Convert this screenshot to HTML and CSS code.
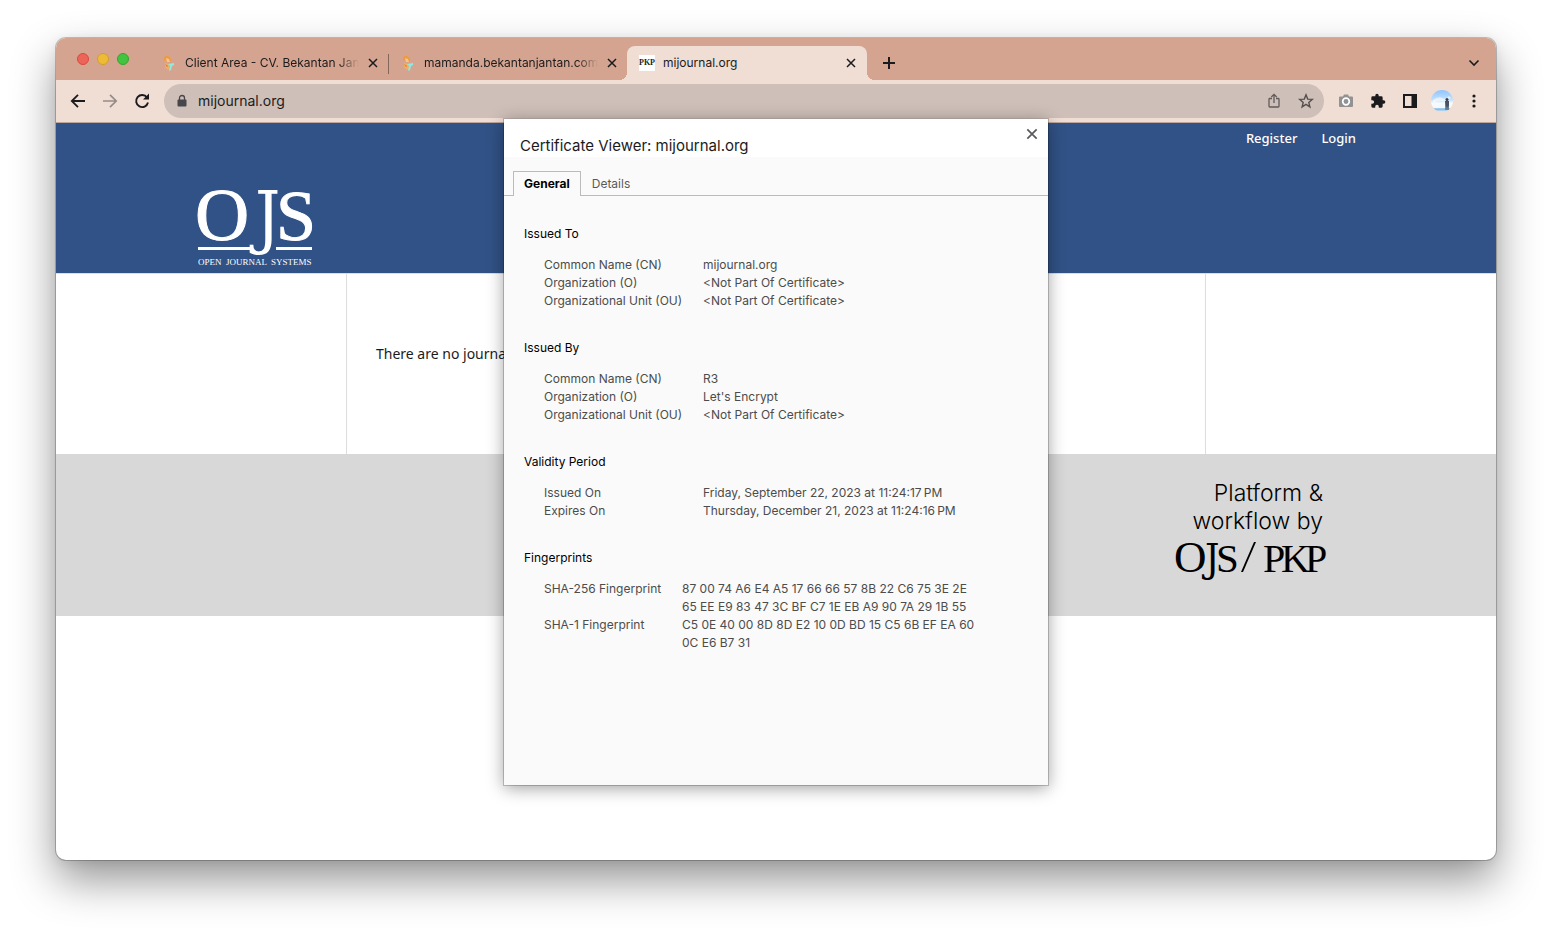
FILE: index.html
```html
<!DOCTYPE html>
<html lang="en">
<head>
<meta charset="utf-8">
<title>mijournal.org</title>
<link rel="stylesheet" href="styles.css">
</head>
<body>
<svg class="defs" width="0" height="0" aria-hidden="true">
  <symbol id="close" viewBox="0 0 12 12"><path d="M2 2l8 8M10 2l-8 8" fill="none" stroke="currentColor" stroke-width="1.5"/></symbol>
  <symbol id="monkey" viewBox="0 0 16 16">
    <path d="M3 3Q4 0 7 1Q10 2 10 6Q9 8 7 7L5 5L3 6Z" fill="#ef9b3d"/>
    <path d="M5 3L8 4L9 7L6 7Z" fill="#f7c58b"/>
    <path d="M4 8l4 1 1 4-2 2-3-3Z" fill="#f3ae62"/>
    <path d="M4 9l3 2-1 1Z" fill="#e0703a"/>
    <path d="M7 9l6-1v2l-2 1-1 4-2 1 1-5Z" fill="#8feadf"/>
  </symbol>
</svg>
<div class="window">
  <div class="tabstrip">
    <div class="lights">
      <button class="light red" aria-label="Close window"></button>
      <button class="light yellow" aria-label="Minimize window"></button>
      <button class="light green" aria-label="Zoom window"></button>
    </div>
    <div class="tab">
      <svg class="favicon"><use href="#monkey"/></svg>
      <span class="tab-title fade">Client Area - CV. Bekantan Jantan</span>
      <button class="tab-close" aria-label="Close tab"><svg width="12" height="12"><use href="#close"/></svg></button>
    </div>
    <div class="tab divided">
      <svg class="favicon"><use href="#monkey"/></svg>
      <span class="tab-title fade">mamanda.bekantanjantan.com/</span>
      <button class="tab-close" aria-label="Close tab"><svg width="12" height="12"><use href="#close"/></svg></button>
    </div>
    <div class="tab active">
      <span class="favicon pkp">PKP</span>
      <span class="tab-title">mijournal.org</span>
      <button class="tab-close" aria-label="Close tab"><svg width="12" height="12"><use href="#close"/></svg></button>
    </div>
    <button class="new-tab" aria-label="New tab"><svg width="12" height="12" viewBox="0 0 12 12"><path d="M6 0v12M0 6h12" stroke="#1b1b1d" stroke-width="2"/></svg></button>
    <button class="tab-menu" aria-label="Search tabs"><svg width="12" height="8" viewBox="0 0 12 8"><path d="M1.500 1.500L6 6l4.500-4.500" fill="none" stroke="#1b1b1d" stroke-width="1.600"/></svg></button>
  </div>

  <div class="toolbar">
    <button aria-label="Back"><svg width="16" height="16" viewBox="0 0 16 16"><path d="M15 8H2M8 1.800L1.800 8 8 14.200" fill="none" stroke="#1b1b1d" stroke-width="1.800"/></svg></button>
    <button aria-label="Forward"><svg width="16" height="16" viewBox="0 0 16 16"><path d="M1 8h13M8 1.800L14.200 8 8 14.200" fill="none" stroke="#968c87" stroke-width="1.700"/></svg></button>
    <button aria-label="Reload"><svg width="16" height="16" viewBox="0 0 16 16"><path d="M13 4.500A6 6 0 1 0 14 9.500" fill="none" stroke="#1b1b1d" stroke-width="1.900"/><path d="M15 .500v6H9Z" fill="#1b1b1d"/></svg></button>
    <div class="omnibox">
      <svg width="10" height="12" viewBox="0 0 10 12"><path d="M2.500 5V3a2.500 2.500 0 0 1 5 0v2" fill="none" stroke="#47474b" stroke-width="1.300"/><rect x="0.500" y="4.500" width="9" height="7" rx="1" fill="#47474b"/></svg>
      <input class="address" type="text" aria-label="Address" value="mijournal.org">
      <button aria-label="Share"><svg width="16" height="16" viewBox="0 0 16 16"><path d="M6 5.500H3.800Q3 5.500 3 6.300V13.200Q3 14 3.800 14H12.200Q13 14 13 13.200V6.300Q13 5.500 12.200 5.500H10M8 10V1.500M5.300 4L8 1.300 10.700 4" fill="none" stroke="#605b5a" stroke-width="1.300"/></svg></button>
      <button aria-label="Bookmark"><svg width="16" height="16" viewBox="0 0 16 16"><path d="M8 1.800l1.700 4.300 4.600.3-3.500 3 1.100 4.500L8 11.400l-3.900 2.500 1.100-4.500-3.500-3 4.600-.3Z" fill="none" stroke="#55504f" stroke-width="1.400"/></svg></button>
    </div>
    <div class="tools">
      <button aria-label="Screenshot"><svg width="16" height="16" viewBox="0 0 16 16"><path d="M2 3.500h3L6 1.500h4l1 2h3Q15 3.500 15 4.500v8.500Q15 14 14 14H2Q1 14 1 13V4.500Q1 3.500 2 3.500Z" fill="#929292"/><circle cx="8" cy="8.500" r="3.300" fill="#929292" stroke="#fff" stroke-width="1.700"/></svg></button>
      <button aria-label="Extensions"><svg width="16" height="16" viewBox="0 0 24 24"><path d="M20.500 11H19V7a2 2 0 0 0-2-2h-4V3.500a2.500 2.500 0 0 0-5 0V5H4a2 2 0 0 0-2 2v3.800h1.500a2.700 2.700 0 0 1 0 5.400H2V20a2 2 0 0 0 2 2h3.800v-1.500a2.700 2.700 0 0 1 5.400 0V22H17a2 2 0 0 0 2-2v-4h1.500a2.500 2.500 0 0 0 0-5Z" fill="#1b1b1d"/></svg></button>
      <button aria-label="Side panel"><svg width="16" height="16" viewBox="0 0 16 16"><path d="M1 1h14v14H1ZM3 3v10h6.500V3Z" fill="#1b1b1d" fill-rule="evenodd"/></svg></button>
      <button aria-label="Profile"><svg width="22" height="22" viewBox="0 0 22 22">
        <defs><linearGradient id="sky" x1="0" y1="0" x2="0" y2="1"><stop offset="0" stop-color="#8fc3ff"/><stop offset=".45" stop-color="#c5e2fb"/><stop offset=".6" stop-color="#f8fbfd"/><stop offset=".8" stop-color="#f3f8fb"/><stop offset=".86" stop-color="#76b5e4"/><stop offset="1" stop-color="#e3edf3"/></linearGradient></defs>
        <circle cx="11" cy="11" r="11" fill="url(#sky)"/><path d="M2 10q5-4 9-2t7-2l2 2q-5 4-9 3t-9 2Z" fill="#fff" opacity=".6"/><circle cx="16" cy="9.500" r="1.500" fill="#333c49"/><path d="M14 11h4v4l-.5 5h-1l-.5-4-.5 4h-1Z" fill="#475365"/></svg></button>
      <button aria-label="Menu"><svg width="16" height="16" viewBox="0 0 16 16" fill="#1b1b1d"><circle cx="8" cy="3" r="1.600"/><circle cx="8" cy="8" r="1.600"/><circle cx="8" cy="13" r="1.600"/></svg></button>
    </div>
  </div>

  <div class="page">
    <header class="site-header">
      <div class="wrap">
        <nav class="user-nav"><a href="#">Register</a><a href="#">Login</a></nav>
        <a class="logo" href="#" aria-label="Open Journal Systems">
          <svg width="118" height="80" viewBox="0 0 118 80" fill="#fff">
            <text class="logo-letter bold-edge" x="-1" y="52" font-size="75">O</text>
            <text class="logo-stem" x="59" y="53" font-size="70">J</text>
            <text class="logo-letter bold-edge" x="80" y="52" font-size="72">S</text>
            <path d="M2 59h53v3H2ZM80 59h36v3H80Z"/>
            <text class="logo-letter" y="77" font-size="9"><tspan x="2">OPEN</tspan><tspan x="30">JOURNAL</tspan><tspan x="75">SYSTEMS</tspan></text>
          </svg>
        </a>
      </div>
    </header>
    <main class="site-main"><p>There are no journals available.</p></main>
    <footer class="site-footer">
      <div class="wrap">
        <a class="brand" href="#">
          <span class="brand-text">Platform &amp;</span>
          <span class="brand-text">workflow by</span>
          <svg width="152" height="44" viewBox="0 0 152 44" fill="#000">
            <text class="logo-letter" x="-1" y="34" font-size="45">O</text>
            <text class="logo-stem" x="30" y="34" font-size="40">J</text>
            <text class="logo-letter" x="41" y="34" font-size="41">S</text>
            <path d="M79 4h2L68 34h-2Z"/>
            <text class="logo-letter" x="88" y="34" font-size="40">P</text>
            <text class="logo-letter" x="106" y="34" font-size="40">K</text>
            <text class="logo-letter" x="130" y="34" font-size="40">P</text>
          </svg>
        </a>
      </div>
    </footer>
  </div>

  <section class="dialog" role="dialog" aria-labelledby="dialog-title">
    <div class="dialog-head">
      <h1 id="dialog-title">Certificate Viewer: mijournal.org</h1>
      <button class="dialog-close" aria-label="Close"><svg width="14" height="14"><use href="#close"/></svg></button>
    </div>
    <div class="dialog-tabs" role="tablist">
      <button class="dialog-tab selected" role="tab" aria-selected="true">General</button>
      <button class="dialog-tab" role="tab" aria-selected="false">Details</button>
    </div>
    <div class="dialog-body">
      <section class="group">
        <h2>Issued To</h2>
        <dl>
          <dt>Common Name (CN)</dt><dd>mijournal.org</dd>
          <dt>Organization (O)</dt><dd>&lt;Not Part Of Certificate&gt;</dd>
          <dt>Organizational Unit (OU)</dt><dd>&lt;Not Part Of Certificate&gt;</dd>
        </dl>
      </section>
      <section class="group">
        <h2>Issued By</h2>
        <dl>
          <dt>Common Name (CN)</dt><dd>R3</dd>
          <dt>Organization (O)</dt><dd>Let's Encrypt</dd>
          <dt>Organizational Unit (OU)</dt><dd>&lt;Not Part Of Certificate&gt;</dd>
        </dl>
      </section>
      <section class="group">
        <h2>Validity Period</h2>
        <dl>
          <dt>Issued On</dt><dd>Friday, September 22, 2023 at 11:24:17&#8239;PM</dd>
          <dt>Expires On</dt><dd>Thursday, December 21, 2023 at 11:24:16&#8239;PM</dd>
        </dl>
      </section>
      <section class="group">
        <h2>Fingerprints</h2>
        <dl class="prints">
          <dt>SHA-256 Fingerprint</dt><dd>87 00 74 A6 E4 A5 17 66 66 57 8B 22 C6 75 3E 2E<br>65 EE E9 83 47 3C BF C7 1E EB A9 90 7A 29 1B 55</dd>
          <dt>SHA-1 Fingerprint</dt><dd>C5 0E 40 00 8D 8D E2 10 0D BD 15 C5 6B EF EA 60<br>0C E6 B7 31</dd>
        </dl>
      </section>
    </div>
  </section>
</div>
</body>
</html>
```
FILE: styles.css
```css
* { box-sizing: border-box; }
body {
  margin: 0;
  padding: 38px 56px 74px;
  min-height: 100vh;
  display: flex;
  background: #fff;
  font-family: Inter, "Liberation Sans", sans-serif;
  font-size: 12px;
  color: #1b1b1d;
}
.defs { position: absolute; }
button {
  padding: 0;
  border: 0;
  background: none;
  font: inherit;
  color: inherit;
  display: flex;
  align-items: center;
  justify-content: center;
}
a { color: inherit; text-decoration: none; }
svg { display: block; flex: none; overflow: visible; }

.window {
  position: relative;
  flex: 1;
  min-width: 0;
  display: flex;
  flex-direction: column;
  border-radius: 10px;
  background: #fff;
  box-shadow: 0 0 0 1px rgba(0, 0, 0, .22), 0 20px 44px rgba(0, 0, 0, .42), 0 2px 12px rgba(0, 0, 0, .08);
}

.tabstrip {
  display: flex;
  align-items: flex-end;
  height: 42px;
  background: #d5a490;
  border-radius: 10px 10px 0 0;
}
.lights { display: flex; gap: 8px; align-self: center; width: 93px; padding-left: 21px; }
.light { width: 12px; height: 12px; border-radius: 50%; border: 1px solid; }
.red { background: #ed6559; border-color: #d9493d; }
.yellow { background: #eebb36; border-color: #d59e2b; }
.green { background: #42c440; border-color: #30a72f; }
.tab {
  display: flex;
  align-items: center;
  width: 239px;
  height: 34px;
  padding: 0 7px 0 12px;
  position: relative;
}
.favicon { width: 16px; height: 16px; flex: none; }
.tab-title { flex: 1; margin: 0 6px 0 8px; overflow: hidden; white-space: nowrap; line-height: 18px; }
.fade { mask-image: linear-gradient(to right, #000 88%, transparent); }
.tab-close { width: 16px; height: 16px; }
.divided::before { content: ""; position: absolute; left: 0; top: 8px; width: 1px; height: 20px; background: #82665c; }
.active { width: 240px; padding-right: 8px; background: #f0ddd4; border-radius: 8px 8px 0 0; }
.active::before, .active::after {
  content: "";
  position: absolute;
  bottom: 0;
  width: 8px;
  height: 8px;
}
.active::before { right: 100%; background: radial-gradient(circle at 0 0, #d5a490 8px, #f0ddd4 8px); }
.active::after { left: 100%; background: radial-gradient(circle at 100% 0, #d5a490 8px, #f0ddd4 8px); }
.pkp {
  display: flex;
  justify-content: center;
  background: #fff;
  font: bold 8px/16px "Liberation Serif", serif;
}
.new-tab { width: 28px; height: 34px; margin-left: 8px; }
.tab-menu { width: 28px; height: 34px; margin: 0 8px 0 auto; }

.toolbar {
  display: flex;
  align-items: center;
  gap: 16px;
  height: 43px;
  padding: 0 14px;
  background: #f0ddd4;
  border-bottom: 1px solid #bda79d;
}
.omnibox {
  flex: 1;
  display: flex;
  align-items: center;
  gap: 16px;
  height: 34px;
  margin-left: -2px;
  padding: 0 10px 0 13px;
  border-radius: 17px;
  background: #cebfb8;
}
.address {
  flex: 1;
  min-width: 0;
  padding: 0;
  margin-left: -5px;
  border: 0;
  background: none;
  font: 14px/20px Inter, "Liberation Sans", sans-serif;
  color: #1b1b1d;
}
.tools { display: flex; align-items: center; gap: 16px; margin-left: -2px; }
.tools button { width: 16px; height: 22px; }

.page { flex: 1; font-family: "Noto Sans", sans-serif; }
.wrap { width: 1160px; max-width: 100%; margin: 0 auto; }
.site-header { height: 151px; background: #315286; border-bottom: 1px solid #ddd; color: #fff; }
.user-nav { display: flex; justify-content: flex-end; gap: 24px; padding-top: 5px; font-size: 13px; font-weight: 500; line-height: 20px; }
.logo { display: block; width: 118px; margin-top: 40px; }
.logo-letter { font-family: "Liberation Serif", serif; }
.bold-edge { stroke: #fff; stroke-width: 1px; }
.logo-stem { font-family: "DejaVu Serif Condensed", "DejaVu Serif", serif; }
.site-main {
  width: 860px;
  max-width: 100%;
  height: 180px;
  margin: 0 auto;
  padding: 69px 29px 0;
  border: solid #ddd;
  border-width: 0 1px;
  font-size: 14px;
  line-height: 22px;
}
.site-main p { margin: 0; }
.site-footer { height: 162px; padding-top: 25px; background: #d8d8d8; }
.site-footer .wrap { padding-right: 29px; }
.brand { display: flex; flex-direction: column; align-items: flex-end; color: #000; }
.brand-text { margin-right: 4px; font: 300 23px/28px Inter, sans-serif; }
.brand svg { margin-top: 3px; }

.dialog {
  position: absolute;
  top: 81px;
  left: calc(50% - 272px);
  width: 544px;
  min-height: 666px;
  background: #fafafa;
  box-shadow: 0 0 0 1px rgba(0, 0, 0, .2), 0 3px 16px rgba(0, 0, 0, .38);
}
.dialog-head { display: flex; justify-content: space-between; height: 38px; padding: 0 9px 0 16px; background: #fff; }
.dialog-head h1 { margin: 16px 0 0; font-size: 15px; font-weight: 400; line-height: 22px; }
.dialog-close { width: 14px; height: 30px; color: #5b5b5f; }
.dialog-tabs { display: flex; padding: 14px 9px 0; height: 39px; border-bottom: 1px solid #bbb; }
.dialog-tab { height: 25px; padding: 0 10px 2px; border: 1px solid transparent; border-bottom: 0; color: #5a5a5a; }
.selected { background: #fafafa; border-color: #bbb; color: #000; font-weight: 700; }
.dialog-body { display: flex; flex-direction: column; gap: 29px; padding: 29px 20px; line-height: 18px; }
.group h2 { margin: 0 0 13px; font-size: 12px; font-weight: 400; color: #000; }
.group dl { display: grid; grid-template-columns: 159px 1fr; margin: 0; padding-left: 20px; color: #4c4c4c; }
.group .prints { grid-template-columns: 138px 1fr; }
.group dd { margin: 0; white-space: nowrap; }
```
